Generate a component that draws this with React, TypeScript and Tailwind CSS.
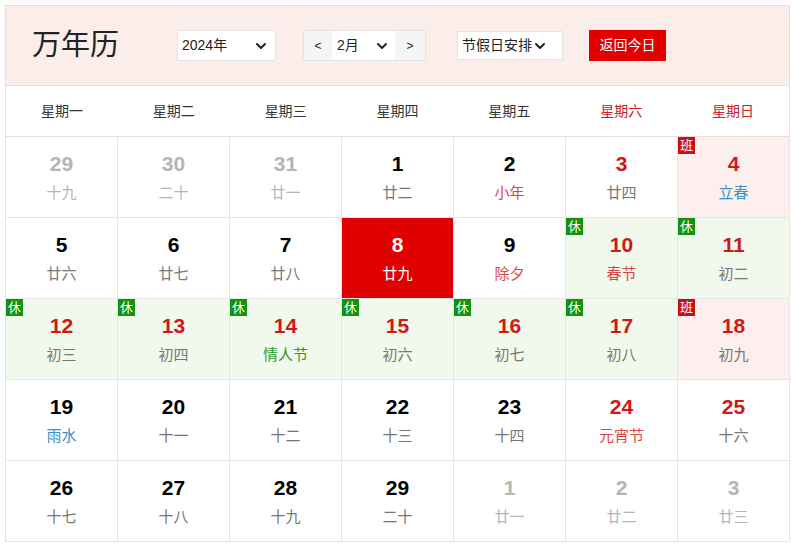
import { ChevronDown } from "lucide-react";

type Day = {
  d: number;
  l: string;
  other?: boolean;
  red?: boolean;
  tag?: "休" | "班";
  lc?: string;
  today?: boolean;
};

const FEST = "text-[#d9464a]";
const TERM = "text-[#3a8fc4]";

const days: Day[] = [
  { d: 29, l: "十九", other: true },
  { d: 30, l: "二十", other: true },
  { d: 31, l: "廿一", other: true },
  { d: 1, l: "廿二" },
  { d: 2, l: "小年", lc: FEST },
  { d: 3, l: "廿四", red: true },
  { d: 4, l: "立春", red: true, tag: "班", lc: TERM },
  { d: 5, l: "廿六" },
  { d: 6, l: "廿七" },
  { d: 7, l: "廿八" },
  { d: 8, l: "廿九", today: true },
  { d: 9, l: "除夕", lc: FEST },
  { d: 10, l: "春节", red: true, tag: "休", lc: FEST },
  { d: 11, l: "初二", red: true, tag: "休" },
  { d: 12, l: "初三", red: true, tag: "休" },
  { d: 13, l: "初四", red: true, tag: "休" },
  { d: 14, l: "情人节", red: true, tag: "休", lc: "text-[#2a9a2a]" },
  { d: 15, l: "初六", red: true, tag: "休" },
  { d: 16, l: "初七", red: true, tag: "休" },
  { d: 17, l: "初八", red: true, tag: "休" },
  { d: 18, l: "初九", red: true, tag: "班" },
  { d: 19, l: "雨水", lc: TERM },
  { d: 20, l: "十一" },
  { d: 21, l: "十二" },
  { d: 22, l: "十三" },
  { d: 23, l: "十四" },
  { d: 24, l: "元宵节", red: true, lc: FEST },
  { d: 25, l: "十六", red: true },
  { d: 26, l: "十七" },
  { d: 27, l: "十八" },
  { d: 28, l: "十九" },
  { d: 29, l: "二十" },
  { d: 1, l: "廿一", other: true },
  { d: 2, l: "廿二", other: true },
  { d: 3, l: "廿三", other: true },
];

const weeks = ["星期一", "星期二", "星期三", "星期四", "星期五", "星期六", "星期日"];

function Cell({ day }: { day: Day }) {
  const bg = day.today
    ? "bg-[#e00000]"
    : day.tag === "休"
      ? "bg-[#f1f9ec]"
      : day.tag === "班"
        ? "bg-[#fcefee]"
        : "bg-white";
  const num = day.today
    ? "text-white"
    : day.other
      ? "text-[#b5b5b5]"
      : day.red
        ? "text-[#d01818]"
        : "text-black";
  const lunar = day.today ? "text-white" : day.other ? "text-[#b5b5b5]" : day.lc ?? "text-[#777]";
  return (
    <div className={`relative h-[81px] border-r border-b border-[#e6e6e6] flex flex-col items-center pt-[14px] ${bg}`}>
      {day.tag && (
        <span
          className={`absolute left-0 top-0 w-[17px] h-[17px] flex items-center justify-center text-[13px] leading-none text-white ${
            day.tag === "休" ? "bg-[#119311]" : "bg-[#c8101a]"
          }`}
        >
          {day.tag}
        </span>
      )}
      <span className={`text-[21px] font-bold leading-[26px] ${num}`}>{day.d}</span>
      <span className={`text-[15px] leading-[24px] mt-[4px] ${lunar}`}>{day.l}</span>
    </div>
  );
}

export default function App() {
  return (
    <div
      className="w-[792px] h-[547px] bg-white pt-[5px] pl-[5px] overflow-hidden"
      style={{ fontFamily: '"Liberation Sans", "Noto Sans CJK SC", sans-serif' }}
    >
      <div className="w-[785px] border-l border-t border-[#ecdcd8]">
        <div className="h-[80px] bg-[#fbedea] flex items-center border-r border-b border-[#ecdcd8]">
          <h1 className="text-[29px] text-[#222] ml-[26px] w-[145px] leading-none">万年历</h1>
          <div className="w-[99px] h-[31px] bg-white border border-[#e3e3e3] rounded-[2px] flex items-center justify-between px-[4px] text-[14px] text-[#222]">
            2024年
            <ChevronDown size={16} strokeWidth={3} className="mr-[2px]" />
          </div>
          <div className="ml-[27px] h-[31px] w-[123px] border border-[#e3e3e3] rounded-[2px] flex text-[14px] text-[#222] bg-[#f5f5f5]">
            <span className="w-[28px] flex items-center justify-center text-[12px]">&lt;</span>
            <span className="w-[63px] bg-white flex items-center justify-between px-[5px]">
              2月
              <ChevronDown size={16} strokeWidth={3} />
            </span>
            <span className="flex-1 flex items-center justify-center text-[12px]">&gt;</span>
          </div>
          <div className="ml-[31px] w-[106px] h-[29px] bg-white border border-[#e3e3e3] flex items-center px-[4px] text-[14px] text-[#222] overflow-hidden whitespace-nowrap">
            节假日安排
            <ChevronDown size={16} strokeWidth={3} className="shrink-0" />
          </div>
          <button className="ml-[26px] w-[77px] h-[31px] bg-[#e00000] text-white text-[14px]">返回今日</button>
        </div>
        <div className="grid grid-cols-7 h-[51px] border-r border-b border-[#ecdcd8]">
          {weeks.map((w, i) => (
            <div key={w} className={`flex items-center justify-center text-[14px] ${i > 4 ? "text-[#c8202a]" : "text-[#333]"}`}>
              {w}
            </div>
          ))}
        </div>
        <div className="grid grid-cols-7">
          {days.map((d, i) => (
            <Cell key={i} day={d} />
          ))}
        </div>
      </div>
    </div>
  );
}
